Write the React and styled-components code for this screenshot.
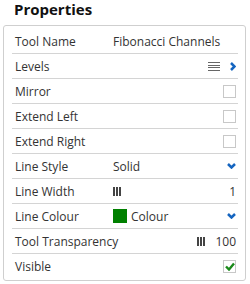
import React from 'react';
import styled, { createGlobalStyle } from 'styled-components';

const GlobalStyle = createGlobalStyle`
  body {
    margin: 0;
    background: #fff;
    font-family: 'Open Sans', 'Noto Sans', sans-serif;
    color: #333;
  }
`;

const Wrap = styled.div`
  width: 250px;
  height: 284px;
`;

const Title = styled.h2`
  box-sizing: border-box;
  margin: 0;
  height: 25px;
  padding: 0 0 0 14px;
  font-size: 15px;
  font-weight: 700;
  line-height: 18px;
  color: #111;
`;

const Panel = styled.div`
  margin: 0 4px 0 3px;
  border: 1px solid #cfcfcf;
  border-radius: 3px;
  padding: 3px 7px 2px 8px;
`;

const Row = styled.div`
  display: grid;
  grid-template-columns: 98px 1fr auto;
  align-items: center;
  height: 24px;
  padding: 0 2px 0 3px;
  font-size: 12px;
  border-bottom: ${p => (p.$last ? 'none' : '1px solid #d4d4d4')};
`;

const Label = styled.span`
  white-space: nowrap;
`;

const Value = styled.span`
  display: flex;
  align-items: center;
  gap: 4px;
  white-space: nowrap;
`;

const End = styled.span`
  display: flex;
  align-items: center;
  justify-content: flex-end;
  gap: 10px;
  grid-column: ${p => (p.$wide ? '2 / 4' : '3')};
`;

const Check = styled.span`
  width: 11px;
  height: 11px;
  border: 1px solid #c8c8c8;
  background: #fff;
  display: flex;
  align-items: center;
  justify-content: center;
`;

const Swatch = styled.span`
  width: 14px;
  height: 14px;
  background: #008000;
`;

const Bars = () => (
  <svg width="8" height="9" viewBox="0 0 8 9">
    <rect x="0" y="0" width="2" height="9" fill="#444" />
    <rect x="3" y="0" width="2" height="9" fill="#444" />
    <rect x="6" y="0" width="2" height="9" fill="#444" />
  </svg>
);

const Lines = () => (
  <svg width="12" height="9" viewBox="0 0 12 9">
    {[0, 3, 5, 8].map(y => (
      <rect key={y} x="0" y={y} width="12" height="1" fill="#666" />
    ))}
  </svg>
);

const ChevronRight = () => (
  <svg width="6" height="9" viewBox="0 0 6 9">
    <path d="M1 1 L4.5 4.5 L1 8" stroke="#1565c0" strokeWidth="2.5" fill="none" />
  </svg>
);

const ChevronDown = () => (
  <svg width="9" height="6" viewBox="0 0 9 6">
    <path d="M1 1 L4.5 4.5 L8 1" stroke="#1565c0" strokeWidth="2.5" fill="none" />
  </svg>
);

const Tick = () => (
  <svg width="10" height="9" viewBox="0 0 10 9">
    <path d="M1 4.5 L4 7.5 L9 1.5" stroke="#1a8a1a" strokeWidth="2.4" fill="none" />
  </svg>
);

export default function App() {
  return (
    <Wrap>
      <GlobalStyle />
      <Title>Properties</Title>
      <Panel>
        <Row>
          <Label>Tool Name</Label>
          <Value>Fibonacci Channels</Value>
        </Row>
        <Row>
          <Label>Levels</Label>
          <End $wide>
            <Lines />
            <ChevronRight />
          </End>
        </Row>
        <Row>
          <Label>Mirror</Label>
          <End $wide><Check /></End>
        </Row>
        <Row>
          <Label>Extend Left</Label>
          <End $wide><Check /></End>
        </Row>
        <Row>
          <Label>Extend Right</Label>
          <End $wide><Check /></End>
        </Row>
        <Row>
          <Label>Line Style</Label>
          <Value>Solid</Value>
          <End><ChevronDown /></End>
        </Row>
        <Row>
          <Label>Line Width</Label>
          <Value><Bars /></Value>
          <End>1</End>
        </Row>
        <Row>
          <Label>Line Colour</Label>
          <Value><Swatch />Colour</Value>
          <End><ChevronDown /></End>
        </Row>
        <Row>
          <Label>Tool Transparency</Label>
          <End $wide><Bars />100</End>
        </Row>
        <Row $last>
          <Label>Visible</Label>
          <End $wide><Check><Tick /></Check></End>
        </Row>
      </Panel>
    </Wrap>
  );
}
